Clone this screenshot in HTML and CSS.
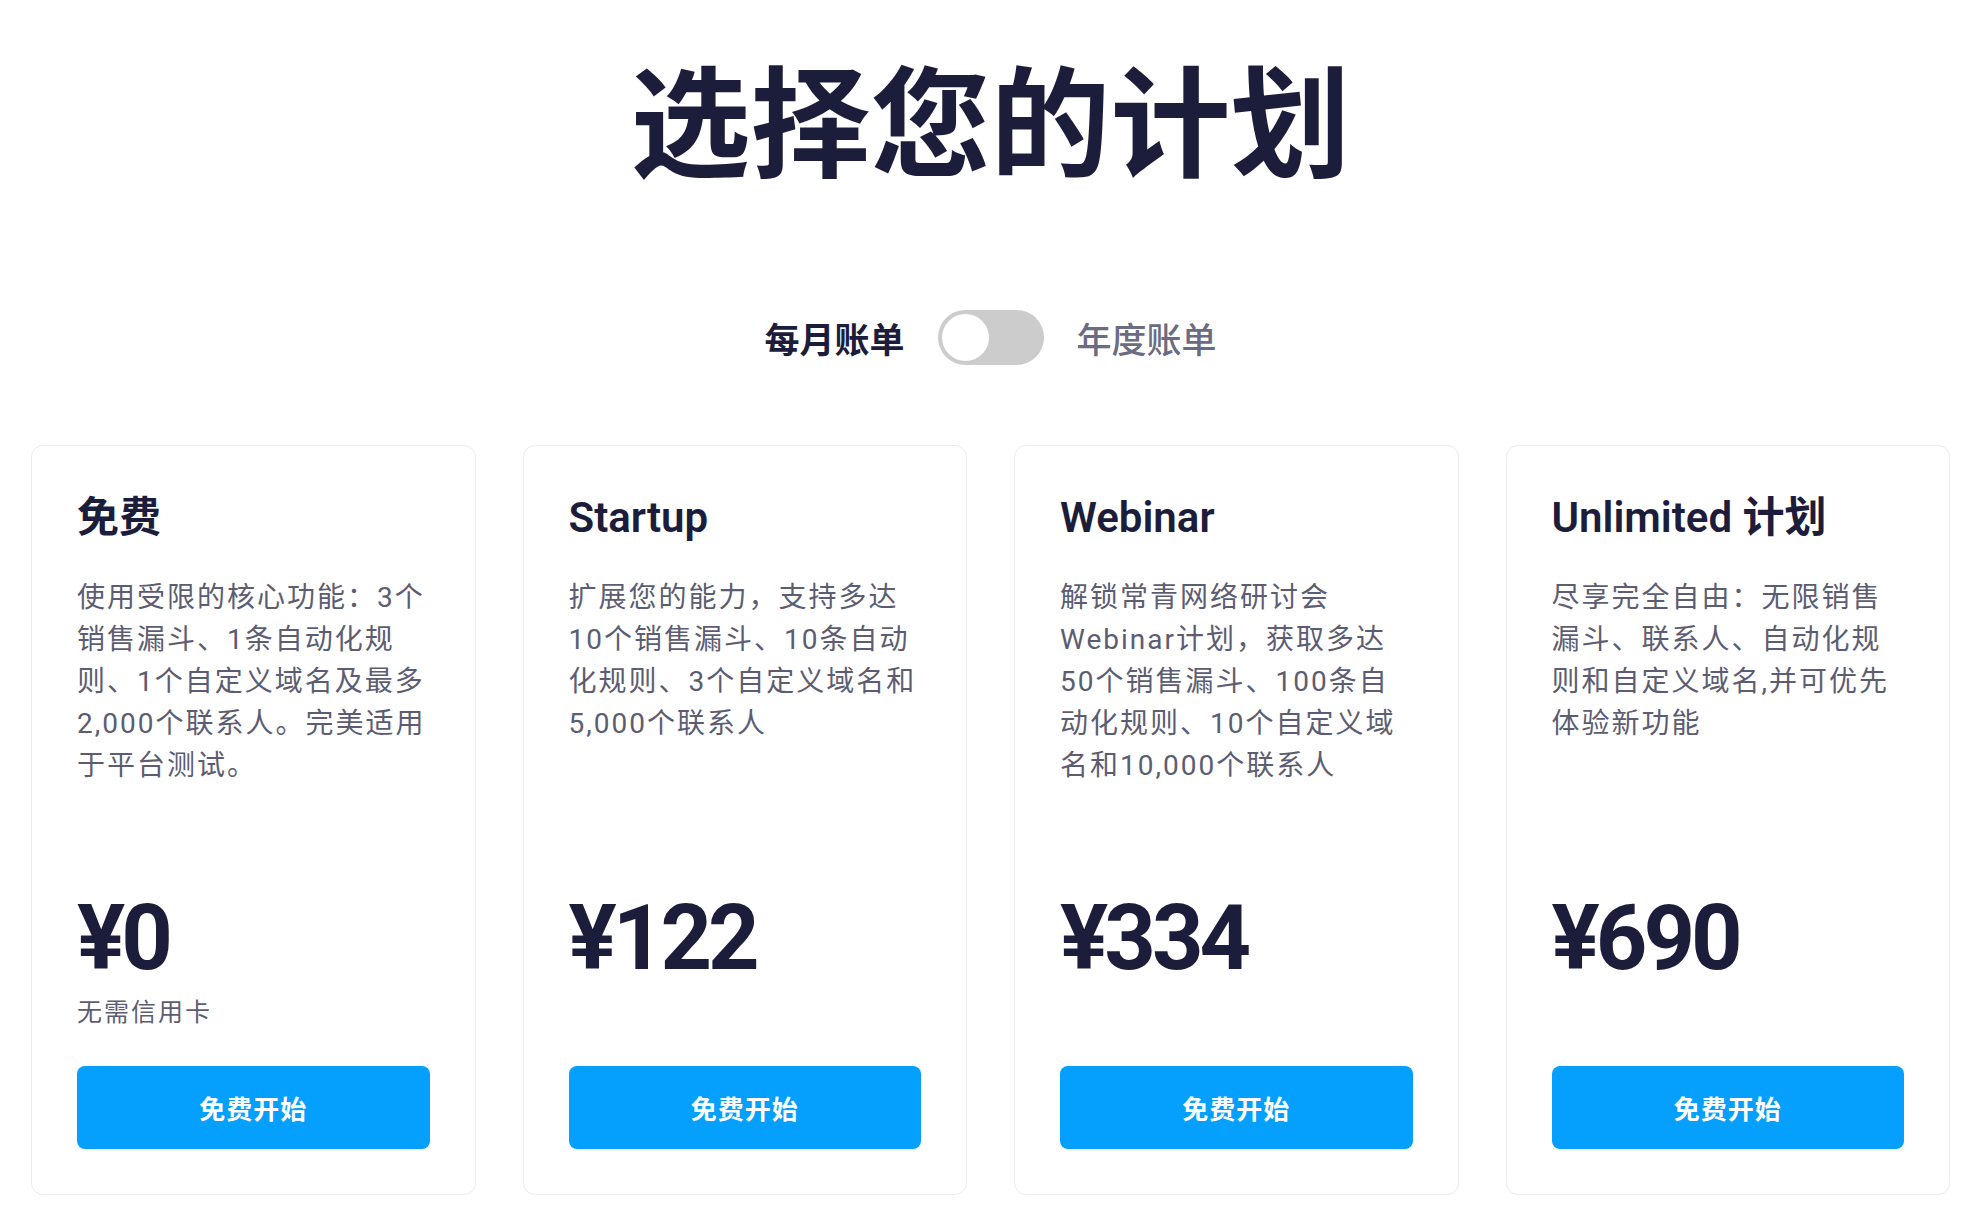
FILE: index.html
```html
<!DOCTYPE html>
<html lang="zh-CN">
<head>
    <meta charset="UTF-8">
    <meta name="viewport" content="width=device-width, initial-scale=1.0">
    <title>选择您的计划</title>
    <link rel="stylesheet" href="styles.css">
</head>
<body>
    <main class="pricing">
        <h1 class="pricing-title">选择您的计划</h1>

        <div class="billing-toggle">
            <span class="billing-label active">每月账单</span>
            <span class="switch"><span class="knob"></span></span>
            <span class="billing-label">年度账单</span>
        </div>

        <div class="plans">
            <div class="plan">
                <h2 class="plan-name">免费</h2>
                <p class="plan-desc">使用受限的核心功能：3个销售漏斗、1条自动化规则、1个自定义域名及最多2,000个联系人。完美适用于平台测试。</p>
                <div class="plan-price">
                    <div class="price">¥0</div>
                    <div class="price-note">无需信用卡</div>
                </div>
                <button class="plan-btn">免费开始</button>
            </div>

            <div class="plan">
                <h2 class="plan-name">Startup</h2>
                <p class="plan-desc">扩展您的能力，支持多达10个销售漏斗、10条自动化规则、3个自定义域名和5,000个联系人</p>
                <div class="plan-price">
                    <div class="price">¥122</div>
                </div>
                <button class="plan-btn">免费开始</button>
            </div>

            <div class="plan">
                <h2 class="plan-name">Webinar</h2>
                <p class="plan-desc">解锁常青网络研讨会Webinar计划，获取多达50个销售漏斗、100条自动化规则、10个自定义域名和10,000个联系人</p>
                <div class="plan-price">
                    <div class="price">¥334</div>
                </div>
                <button class="plan-btn">免费开始</button>
            </div>

            <div class="plan">
                <h2 class="plan-name">Unlimited 计划</h2>
                <p class="plan-desc">尽享完全自由：无限销售漏斗、联系人、自动化规则和自定义域名,并可优先体验新功能</p>
                <div class="plan-price">
                    <div class="price">¥690</div>
                </div>
                <button class="plan-btn">免费开始</button>
            </div>
        </div>
    </main>
</body>
</html>
```

FILE: styles.css
```css
body {
    margin: 0;
    background: #ffffff;
    color: #1c1d3b;
    font-family: Roboto, "Noto Sans CJK SC", sans-serif;
}
.pricing {
    padding: 0 34px 40px 31px;
}
.pricing-title {
    margin: 44px 0 0;
    font-family: "Noto Sans CJK SC", sans-serif;
    font-size: 120px;
    font-weight: 700;
    line-height: 1.2;
    text-align: center;
    color: #1c1d3b;
}
.billing-toggle {
    display: flex;
    justify-content: center;
    align-items: center;
    gap: 33px;
    margin-top: 122px;
}
.billing-label {
    font-family: "Noto Sans CJK SC", sans-serif;
    font-size: 35px;
    font-weight: 500;
    color: #6b6c80;
}
.billing-label.active {
    font-weight: 700;
    color: #1c1d3b;
}
.switch {
    display: flex;
    align-items: center;
    width: 106px;
    height: 55px;
    padding: 4px;
    box-sizing: border-box;
    border-radius: 28px;
    background-color: #cccccc;
}
.knob {
    width: 47px;
    height: 47px;
    border-radius: 50%;
    background-color: #ffffff;
}
.plans {
    display: grid;
    grid-template-columns: repeat(4, 1fr);
    gap: 47px;
    margin-top: 80px;
}
.plan {
    display: flex;
    flex-direction: column;
    min-height: 750px;
    box-sizing: border-box;
    padding: 45px;
    border: 1px solid #ececf0;
    border-radius: 12px;
    background: #ffffff;
}
.plan-name {
    margin: 0;
    font-size: 42px;
    font-weight: 600;
    line-height: 54px;
    color: #1c1d3b;
}
.plan-desc {
    margin: 32px 0 0;
    font-size: 28px;
    letter-spacing: 2px;
    line-height: 42px;
    color: #5c5d72;
}
.plan-price {
    margin-top: auto;
    height: 177px;
}
.price {
    font-size: 90px;
    font-weight: 700;
    line-height: 100px;
    letter-spacing: -4px;
    color: #1c1d3b;
}
.price-note {
    margin-top: 6px;
    font-size: 25px;
    letter-spacing: 2px;
    line-height: 36px;
    color: #5c5d72;
}
.plan-btn {
    height: 83px;
    border: none;
    border-radius: 8px;
    background-color: #05a0fd;
    color: #ffffff;
    font-family: "Noto Sans CJK SC", sans-serif;
    font-size: 26px;
    font-weight: 700;
    letter-spacing: 1px;
    cursor: pointer;
}
.plan-btn:hover {
    background-color: #008ee6;
}
```
